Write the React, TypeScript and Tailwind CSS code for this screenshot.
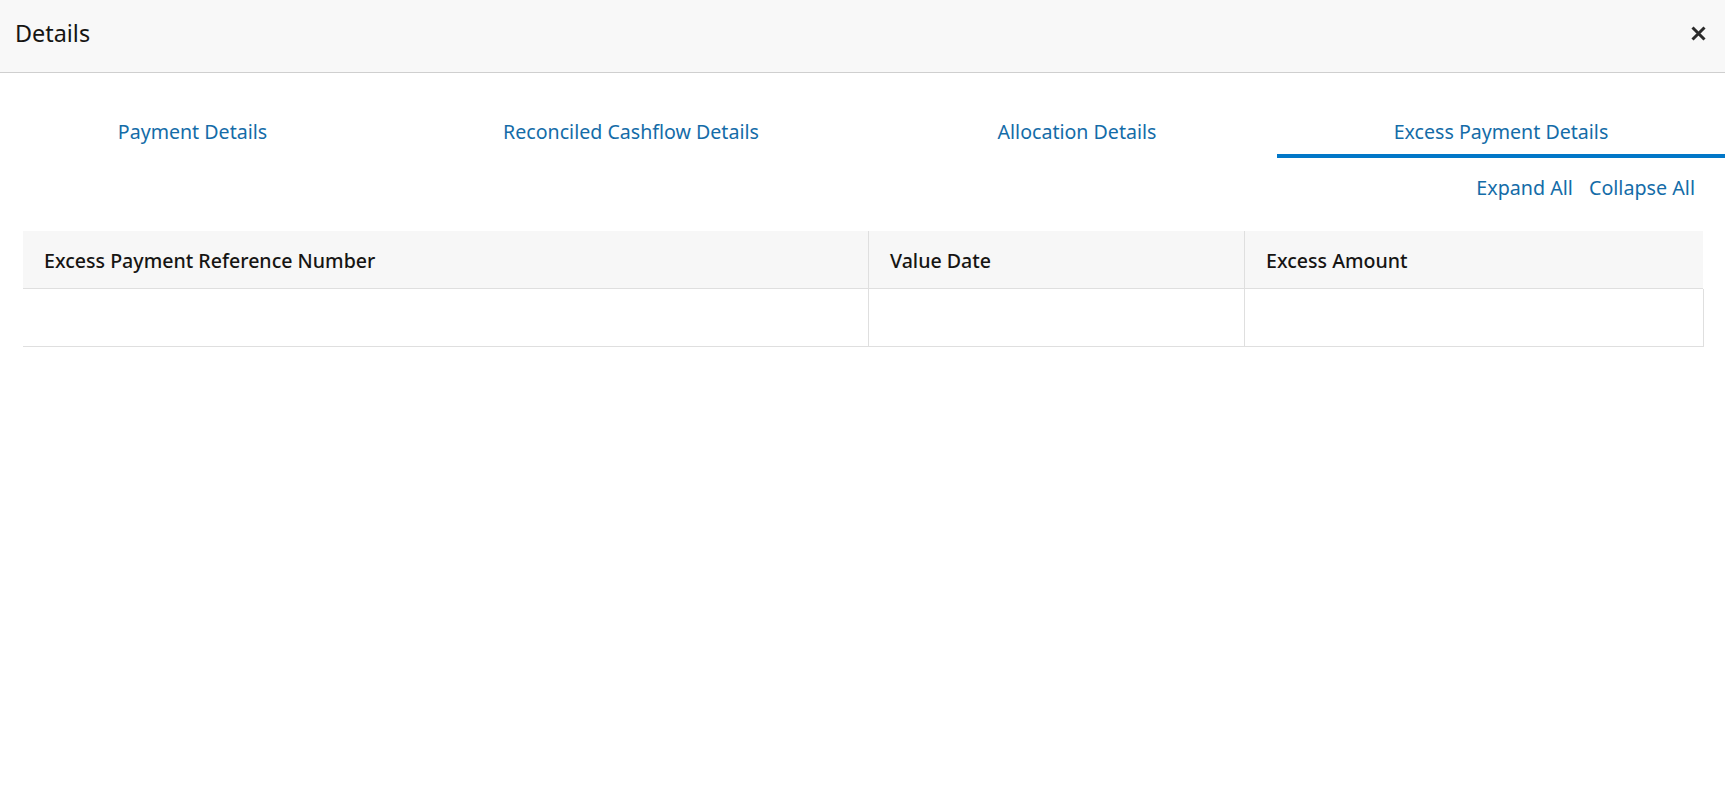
const tabs = [
  { label: 'Payment Details', width: 'w-[385px]', active: false },
  { label: 'Reconciled Cashflow Details', width: 'w-[492px]', active: false },
  { label: 'Allocation Details', width: 'w-[400px]', active: false },
  { label: 'Excess Payment Details', width: 'w-[448px]', active: true },
];

const columns = [
  { label: 'Excess Payment Reference Number', width: 'w-[846px]' },
  { label: 'Value Date', width: 'w-[376px]' },
  { label: 'Excess Amount', width: 'flex-1' },
];

const App = () => {
  return (
    <div className="h-[809px] w-[1725px] overflow-hidden bg-white font-['Noto_Sans',sans-serif]">
      <div className="flex h-[73px] items-center justify-between border-b border-[#cfcfcf] bg-[#f8f8f8] pb-[5px] pl-[15px] pr-[18px]">
        <h1 className="text-[23.4px] leading-none text-[#161513]">Details</h1>
        <svg width="17" height="17" viewBox="0 0 17 17" className="mb-[1px] text-[#2b2b2b]">
          <path d="M2.5 2.5L14.5 14.5M14.5 2.5L2.5 14.5" stroke="currentColor" strokeWidth="3" fill="none" />
        </svg>
      </div>

      <div className="mt-[30px] flex h-[55px]">
        {tabs.map((tab) => (
          <div
            key={tab.label}
            className={`flex items-start justify-center pt-[15px] text-[19.6px] leading-[28px] text-[#146ca8] ${tab.width} ${tab.active ? 'border-b-4 border-[#0277c8]' : ''}`}
          >
            {tab.label}
          </div>
        ))}
      </div>

      <div className="mt-[16px] flex justify-end gap-[16px] pr-[30px] text-[19.7px] leading-[28px] text-[#146ca8]">
        <span>Expand All</span>
        <span>Collapse All</span>
      </div>

      <div className="ml-[23px] mt-[29px] w-[1681px]">
        <div className="flex h-[58px] w-[1680px] border-b border-[#dfdfdf] bg-[#f7f7f7]">
          {columns.map((col, i) => (
            <div
              key={col.label}
              className={`flex items-center pl-[21px] pt-[3px] text-[19.6px] font-medium text-[#161513] ${col.width} ${i < 2 ? 'border-r border-[#dfdfdf]' : ''}`}
            >
              {col.label}
            </div>
          ))}
        </div>
        <div className="flex h-[58px] border-b border-r border-[#dfdfdf]">
          {columns.map((col, i) => (
            <div key={col.label} className={`${col.width} ${i < 2 ? 'border-r border-[#dfdfdf]' : ''}`} />
          ))}
        </div>
      </div>
    </div>
  );
};

export default App;
